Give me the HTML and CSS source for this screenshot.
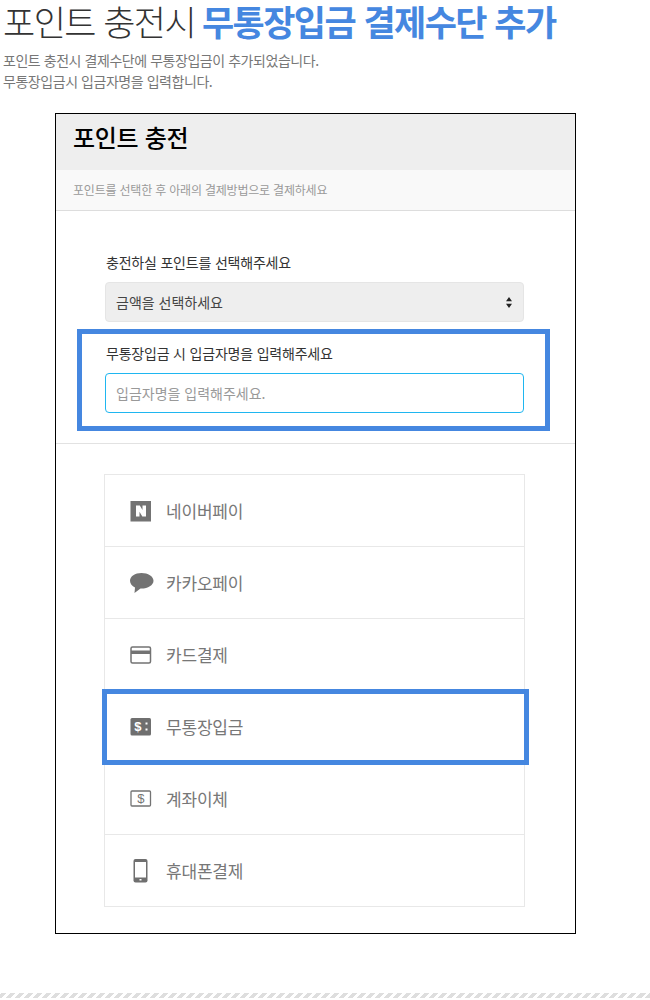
FILE: index.html
```html
<!DOCTYPE html>
<html lang="ko">
<head>
<meta charset="utf-8">
<title>포인트 충전</title>
<link rel="stylesheet" href="styles.css">
</head>
<body>
<header class="intro">
  <h1 class="title">포인트 충전시 <strong class="title-em">무통장입금 결제수단 추가</strong></h1>
  <p class="desc">포인트 충전시 결제수단에 무통장입금이 추가되었습니다.<br>무통장입금시 입금자명을 입력합니다.</p>
</header>
<main class="card">
  <div class="card-head"><h2 class="card-title">포인트 충전</h2></div>
  <div class="card-sub">포인트를 선택한 후 아래의 결제방법으로 결제하세요</div>
  <section class="form">
    <label class="label">충전하실 포인트를 선택해주세요</label>
    <div class="select">
      <span>금액을 선택하세요</span>
      <svg class="updown" width="6" height="11" viewBox="0 0 6 11"><path d="M3 0 6 4.300H0zM3 11 0 6.700H6z" fill="#222"/></svg>
    </div>
    <div class="name-field">
      <label class="label">무통장입금 시 입금자명을 입력해주세요</label>
      <div class="input">입금자명을 입력해주세요.</div>
    </div>
  </section>
  <ul class="pay-list">
    <li class="pay">
      <svg class="ico" width="22" height="22" viewBox="0 0 22 22"><rect x="0.500" y="1" width="20.500" height="20.500" fill="#737373"/><path d="M6 5.500h3.800l2.700 4.500V5.500H16v11h-3.700l-2.800-4.700v4.700H6z" fill="#fff"/></svg>
      <span>네이버페이</span>
    </li>
    <li class="pay">
      <svg class="ico ico-wide" width="24" height="22" viewBox="0 0 24 22"><path d="M11.500 1C5.100 1 0 4.300 0 8.800c0 2.900 2.100 5.300 5 6.600L4.500 21 10.500 16.600h1c6.400 0 12-3.300 12-7.800C23.500 4.300 17.900 1 11.500 1z" fill="#737373"/></svg>
      <span>카카오페이</span>
    </li>
    <li class="pay">
      <svg class="ico" width="22" height="22" viewBox="0 0 22 22"><rect x="1" y="3" width="19.500" height="16" rx="1.500" fill="none" stroke="#737373" stroke-width="1.500"/><rect x="1" y="6.500" width="19.500" height="3.500" fill="#737373"/></svg>
      <span>카드결제</span>
    </li>
    <li class="pay pay-marked">
      <svg class="ico" width="22" height="22" viewBox="0 0 22 22"><rect x="0.500" y="2" width="20.500" height="17.500" rx="1.500" fill="#6f6f6f"/><text x="4" y="15" class="ico-text ico-text-light">$</text><rect x="15.500" y="6.500" width="2" height="2" fill="#fff"/><rect x="15.500" y="12.500" width="2" height="2" fill="#fff"/></svg>
      <span>무통장입금</span>
    </li>
    <li class="pay">
      <svg class="ico" width="22" height="22" viewBox="0 0 22 22"><rect x="1" y="3" width="19.500" height="15" rx="1" fill="none" stroke="#737373" stroke-width="1.300"/><text x="7" y="15" class="ico-text">$</text></svg>
      <span>계좌이체</span>
    </li>
    <li class="pay">
      <svg class="ico" width="22" height="24" viewBox="0 0 22 24"><rect x="3.500" y="0" width="14" height="23.500" rx="2" fill="#6f6f6f"/><rect x="5" y="3" width="11" height="15.500" fill="#fff"/><rect x="9.500" y="20" width="2" height="1.500" fill="#fff"/></svg>
      <span>휴대폰결제</span>
    </li>
  </ul>
</main>
<div class="stripe"></div>
</body>
</html>
```
FILE: styles.css
```css
* { box-sizing: border-box; }
html, body { margin: 0; padding: 0; }
body {
  height: 1000px;
  position: relative;
  overflow: hidden;
  background: #fff;
  font-family: "Noto Sans CJK KR", "Noto Sans", sans-serif;
  color: #333;
}
.intro { padding: 0 0 0 3px; height: 113px; }
.title {
  margin: 0;
  font-size: 35px;
  line-height: 42px;
  font-weight: 300;
  color: #333;
  letter-spacing: -1.55px;
  white-space: nowrap;
}
.title-em { margin-left: -1.5px; font-weight: 700; color: #4587e0; }
.desc {
  margin: 8px 0 0;
  font-size: 14px;
  line-height: 21px;
  color: #777;
  letter-spacing: -0.45px;
}
.card {
  width: 521px;
  height: 821px;
  margin-left: 55px;
  border: 1px solid #000;
  background: #fff;
}
.card-head {
  height: 56px;
  background: #eee;
  padding: 7px 0 0 17px;
}
.card-title {
  margin: 0;
  font-size: 24px;
  line-height: 32px;
  font-weight: 500;
  color: #000;
  letter-spacing: -0.3px;
}
.card-sub {
  height: 41px;
  padding: 10px 0 0 17px;
  background: #f9f9f9;
  border-bottom: 1px solid #ddd;
  font-size: 12px;
  line-height: 20px;
  color: #999;
  letter-spacing: -0.2px;
}
.form {
  height: 233px;
  padding: 40px 51px 0 49px;
  border-bottom: 1px solid #e2e2e2;
}
.label {
  display: block;
  padding-left: 1px;
  font-size: 14px;
  line-height: 22px;
  color: #333;
  letter-spacing: -0.2px;
}
.select {
  height: 40px;
  margin-top: 9px;
  padding: 0 11px 0 10px;
  display: flex;
  align-items: center;
  justify-content: space-between;
  background: #eee;
  border: 1px solid #e5e5e5;
  border-radius: 4px;
  font-size: 14px;
  color: #444;
}
.name-field {
  margin: 7px -26px 0 -28px;
  height: 102px;
  padding: 8px 21px 0 23px;
  border: 5px solid #4587e0;
}
.input {
  height: 40px;
  margin-top: 9px;
  padding: 0 10px;
  display: flex;
  align-items: center;
  border: 1px solid #1fb6f0;
  border-radius: 4px;
  font-size: 14px;
  color: #999;
}
.pay-list {
  list-style: none;
  margin: 30px 0 0 48px;
  padding: 0;
  width: 421px;
  border: 1px solid #e8e8e8;
}
.pay {
  height: 72px;
  padding-left: 25px;
  display: flex;
  align-items: center;
  gap: 14px;
  position: relative;
  border-bottom: 1px solid #e8e8e8;
  font-size: 17px;
  color: #777;
  letter-spacing: -0.2px;
}
.pay:last-child { height: 71px; border-bottom: 0; }
.ico { flex: none; }
.ico-wide { margin-right: -2px; }
.pay-marked::after {
  content: "";
  position: absolute;
  left: -3px;
  right: -5px;
  top: -2px;
  bottom: -3px;
  border: 5px solid #4587e0;
}
.ico-text { font-family: "Liberation Mono", monospace; font-size: 13px; font-weight: 400; fill: #737373; }
.ico-text-light { fill: #fff; font-weight: 700; }
.stripe {
  position: absolute;
  left: 0;
  right: 0;
  bottom: 2px;
  height: 5px;
  background: repeating-linear-gradient(-45deg, #dedede 0, #dedede 4.200px, #fff 4.200px, #fff 6.364px);
}
```
